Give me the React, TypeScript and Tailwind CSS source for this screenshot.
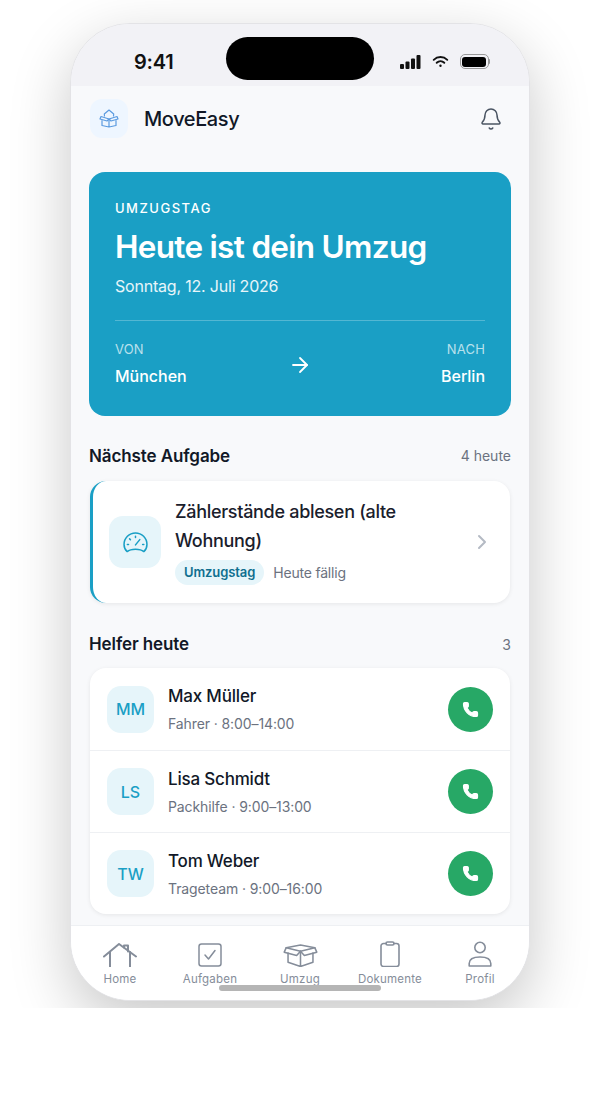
import React from 'react';
import { Bell, ChevronRight, ArrowRight, Phone } from 'lucide-react';

const helpers = [
  { initials: 'MM', name: 'Max Müller', info: 'Fahrer · 8:00–14:00' },
  { initials: 'LS', name: 'Lisa Schmidt', info: 'Packhilfe · 9:00–13:00' },
  { initials: 'TW', name: 'Tom Weber', info: 'Trageteam · 9:00–16:00' },
];

const BoxIcon = () => (
  <svg viewBox="0 0 36 24" fill="none" stroke="currentColor" strokeWidth="1.6" strokeLinejoin="round" strokeLinecap="round" className="w-[35px] h-[23px]">
    <path d="M18 7.500 3 4 18 1l15 3-15 3.500Z" />
    <path d="M1 8.500 3 4M35 8.500 33 4M1 8.500 14 12l4-4.500 4 4.500 13-3.500" />
    <path d="M5 9.500V19l13 4.500L31 19V9.500M18 7.500v16" />
  </svg>
);

const LogoIcon = () => (
  <svg viewBox="0 0 20 19" fill="none" stroke="currentColor" strokeWidth="1.2" strokeLinejoin="round" strokeLinecap="round" className="w-[20px] h-[19px]">
    <path d="M5.500 7 5.300 5 10 1l4.700 4-.2 2" />
    <path d="M10 10 2 7.500 1 10l7 2 2-2 2 2 7-2-1-2.500L10 10Z" />
    <path d="M3 11.500v5L10 18l7-1.500v-5M10 10v8" />
  </svg>
);

const HomeIcon = () => (
  <svg viewBox="0 0 34 24" fill="none" stroke="currentColor" strokeWidth="2" strokeLinejoin="round" strokeLinecap="round" className="w-[34px] h-[24px]">
    <path d="M1 13.500 16 1l17 12.500" />
    <path d="M7 9v15M27 9v15" />
    <path d="M21 4.500V2.500h4v6" />
  </svg>
);

const TaskIcon = () => (
  <svg viewBox="0 0 24 24" fill="none" stroke="currentColor" strokeWidth="1.5" strokeLinejoin="round" strokeLinecap="round" className="w-[24px] h-[24px]">
    <rect x="1" y="1" width="22" height="22" rx="2.500" />
    <path d="m7 12 3.500 4L17 7.500" />
  </svg>
);

const ClipIcon = () => (
  <svg viewBox="0 0 20 26" fill="none" stroke="currentColor" strokeWidth="1.6" strokeLinejoin="round" strokeLinecap="round" className="w-[20px] h-[26px]">
    <path d="M6 2.500H3.500A2.500 2.500 0 0 0 1 5v18a2.500 2.500 0 0 0 2.500 2.500h13A2.500 2.500 0 0 0 19 23V5a2.500 2.500 0 0 0-2.500-2.500H14" />
    <rect x="6" y="1" width="8" height="3" rx="1.500" />
  </svg>
);

const UserIcon = () => (
  <svg viewBox="0 0 24 26" fill="none" stroke="currentColor" strokeWidth="1.6" strokeLinejoin="round" strokeLinecap="round" className="w-[24px] h-[26px]">
    <circle cx="12" cy="6.500" r="5.200" />
    <path d="M1.200 25v-2.500c0-4 4-6.500 10.800-6.500s10.800 2.500 10.800 6.500V25H1.200Z" />
  </svg>
);

const GaugeIcon = () => (
  <svg viewBox="0 0 26 22" fill="none" stroke="currentColor" strokeWidth="1.6" strokeLinejoin="round" strokeLinecap="round" className="w-[25px] h-[21px]">
    <path d="M4.300 20.500C2 18.500 1 16 1 13a12 12 0 0 1 24 0c0 3-1 5.500-3.300 7.500-1.700-1.500-5-2.500-8.700-2.500s-7 1-8.700 2.500Z" />
    <path d="M13 4.500v1.200M6.800 7.200l.9.900M4.500 13h1.200M20.500 13h1.200M13 13.500 17.500 8" />
  </svg>
);

const tabs = [
  { label: 'Home', icon: <HomeIcon /> },
  { label: 'Aufgaben', icon: <TaskIcon /> },
  { label: 'Umzug', icon: <BoxIcon /> },
  { label: 'Dokumente', icon: <ClipIcon /> },
  { label: 'Profil', icon: <UserIcon /> },
];

const App: React.FC = () => {
  return (
    <div className="h-[1118px] bg-white font-['Inter','Noto_Sans',sans-serif]">
      <div className="h-[1008px] overflow-hidden pt-[23px] flex justify-center">
        <div className="relative w-[460px] h-[978px] rounded-[60px] overflow-hidden bg-[#f8f9fb] flex flex-col border border-[#e3e3e6] shadow-[0_20px_60px_rgba(0,0,0,0.22)]">
          {/* Status bar */}
          <div className="h-[62px] shrink-0 bg-[#f2f2f6] flex items-center justify-between pl-[63px] pr-[39px] pt-[13px]">
            <span className="text-[20px] font-semibold text-[#111] tracking-[-0.2px]">9:41</span>
            <div className="flex items-center gap-[11px]">
              <svg viewBox="0 0 21 14" className="w-[21px] h-[14px]" fill="#111">
                <rect x="0" y="9" width="4" height="5" rx="1" />
                <rect x="5.500" y="6.500" width="4" height="7.500" rx="1" />
                <rect x="11" y="3.500" width="4" height="10.500" rx="1" />
                <rect x="16.500" y="0" width="4" height="14" rx="1" />
              </svg>
              <svg viewBox="0 0 20 14" className="w-[17px] h-[13px]" fill="none" stroke="#111" strokeWidth="2.200" strokeLinecap="round">
                <path d="M2 5a11.500 11.500 0 0 1 16 0" />
                <path d="M5.500 8.500a6.500 6.500 0 0 1 9 0" />
                <circle cx="10" cy="12" r="1.400" fill="#111" stroke="none" />
              </svg>
              <div className="flex items-center">
                <div className="w-[29px] h-[15px] rounded-[5px] border border-[#999] p-[1.5px]">
                  <div className="w-full h-full rounded-[3px] bg-black" />
                </div>
                <div className="w-[1.5px] h-[5px] bg-[#999] rounded-r" />
              </div>
            </div>
          </div>
          <div className="absolute left-[155px] top-[13px] w-[148px] h-[43px] rounded-[22px] bg-black" />

          <div className="flex-1 px-[18px] min-h-0">
            {/* Header */}
            <div className="flex items-center justify-between pt-[13px] pl-px pr-[8px]">
              <div className="flex items-center gap-[16px]">
                <div className="w-[38px] h-[39px] rounded-[12px] bg-[#eef6ff] flex items-center justify-center text-[#5b9be0]">
                  <LogoIcon />
                </div>
                <span className="text-[20px] font-medium text-[#111827] tracking-[-0.4px]">MoveEasy</span>
              </div>
              <Bell className="w-[24px] h-[24px] text-[#4b5563]" strokeWidth={1.5} />
            </div>

            {/* Hero */}
            <div className="mt-[34px] h-[244px] rounded-[16px] bg-[#1a9fc5] px-[26px] pt-[27px] text-white">
              <div className="text-[13px] leading-[18px] font-medium tracking-[1.5px]">UMZUGSTAG</div>
              <div className="mt-[10px] text-[31.5px] leading-[40px] font-semibold tracking-[-0.7px]">Heute ist dein Umzug</div>
              <div className="mt-[7px] text-[16px] leading-[24px] text-white/90 tracking-[-0.2px]">Sonntag, 12. Juli 2026</div>
              <div className="mt-[22px] h-px bg-white/25" />
              <div className="mt-[19px] grid grid-cols-3 items-center">
                <div>
                  <div className="text-[13px] leading-[18px] text-white/70 tracking-[0.2px]">VON</div>
                  <div className="mt-[8px] text-[16px] leading-[20px] font-medium">München</div>
                </div>
                <ArrowRight className="justify-self-center mt-[4px] w-[24px] h-[24px]" strokeWidth={1.8} />
                <div className="text-right">
                  <div className="text-[13px] leading-[18px] text-white/70 tracking-[0.2px]">NACH</div>
                  <div className="mt-[8px] text-[16px] leading-[20px] font-medium">Berlin</div>
                </div>
              </div>
            </div>

            {/* Next task */}
            <div className="mt-[29px] flex items-center justify-between">
              <span className="text-[17px] leading-[22px] font-semibold text-[#111827] tracking-[-0.1px]">Nächste Aufgabe</span>
              <span className="text-[14px] text-[#6b7280] -translate-y-px">4 heute</span>
            </div>
            <div className="mt-[14px] mx-px h-[122px] rounded-[16px] bg-white border-l-[3px] border-[#1a9fc5] shadow-[0_1px_4px_rgba(0,0,0,0.08)] flex items-center pl-[16px] pr-[16px]">
              <div className="w-[52px] h-[52px] rounded-[14px] bg-[#e6f5fa] flex items-center justify-center text-[#1a9fc5]">
                <GaugeIcon />
              </div>
              <div className="ml-[14px] flex-1 min-w-0">
                <div className="w-[250px] text-[18px] leading-[29px] font-medium text-[#1a202c] tracking-[-0.3px] -mt-[3px]">Zählerstände ablesen (alte Wohnung)</div>
                <div className="mt-[5px] flex items-center gap-[9px]">
                  <span className="h-[25px] px-[9px] rounded-full bg-[#e6f5fa] text-[13px] leading-[25px] font-semibold text-[#0f6f8f] tracking-[-0.1px]">Umzugstag</span>
                  <span className="text-[14px] text-[#6b7280] tracking-[-0.2px]">Heute fällig</span>
                </div>
              </div>
              <ChevronRight className="w-[24px] h-[24px] text-[#b4bac4]" strokeWidth={2} />
            </div>

            {/* Helpers */}
            <div className="mt-[30px] flex items-center justify-between">
              <span className="text-[17px] leading-[22px] font-semibold text-[#111827] tracking-[-0.1px]">Helfer heute</span>
              <span className="text-[14px] text-[#6b7280]">3</span>
            </div>
            <div className="mt-[13px] mx-px rounded-[16px] bg-white shadow-[0_1px_4px_rgba(0,0,0,0.08)] divide-y divide-[#eef0f3]">
              {helpers.map((h) => (
                <div key={h.initials} className="h-[82px] flex items-center pl-[17px] pr-[17px] first:h-[83px] last:h-[81px]">
                  <div className="w-[47px] h-[47px] rounded-[14px] bg-[#e6f5fa] flex items-center justify-center text-[16px] font-medium text-[#1a9fc5]">
                    {h.initials}
                  </div>
                  <div className="ml-[14px] flex-1">
                    <div className="text-[17px] leading-[24px] font-medium text-[#111827] tracking-[-0.2px]">{h.name}</div>
                    <div className="mt-[6px] text-[14px] leading-[20px] text-[#6b7280] tracking-[-0.1px]">{h.info}</div>
                  </div>
                  <div className="w-[45px] h-[45px] rounded-full bg-[#27a866] flex items-center justify-center text-white">
                    <Phone className="w-[17px] h-[17px]" fill="currentColor" strokeWidth={1.5} />
                  </div>
                </div>
              ))}
            </div>
          </div>

          {/* Tab bar */}
          <div className="relative h-[75px] shrink-0 bg-white border-t border-[#eef0f3] flex items-start justify-around px-[4px] pt-[15px] text-[#858d9a]">
            {tabs.map((t) => (
              <div key={t.label} className="w-[90px] flex flex-col items-center">
                <div className="h-[26px] flex items-end justify-center">{t.icon}</div>
                <span className="mt-[4px] text-[11.5px] leading-[16px] tracking-[0.2px]">{t.label}</span>
              </div>
            ))}
            <div className="absolute left-[148px] bottom-[9px] w-[162px] h-[6px] rounded-full bg-[#b5b5b5]" />
          </div>
        </div>
      </div>
    </div>
  );
};

export default App;
